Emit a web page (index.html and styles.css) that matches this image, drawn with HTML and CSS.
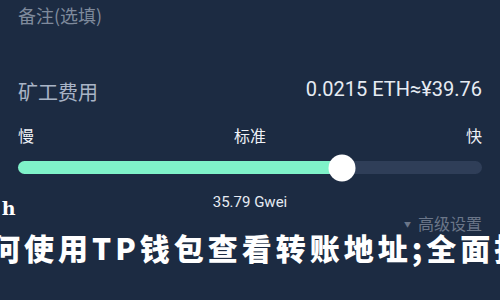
FILE: index.html
```html
<!DOCTYPE html>
<html lang="zh">
<head>
<meta charset="utf-8">
<link rel="stylesheet" href="styles.css">
</head>
<body>
<div class="page">
  <div class="note">备注(选填)</div>
  <div class="fee-row">
    <span class="fee-label">矿工费用</span>
    <span class="fee-value">0.0215 ETH≈¥39.76</span>
  </div>
  <div class="levels">
    <span>慢</span>
    <span>标准</span>
    <span>快</span>
  </div>
  <div class="slider">
    <div class="fill" style="width: 69.8%"></div>
    <div class="thumb" style="left: 69.8%"></div>
  </div>
  <div class="gwei">35.79 Gwei</div>
  <div class="advanced"><span class="caret">▼</span>高级设置</div>
</div>
<div class="wm-small">sh</div>
<div class="wm-title">如何使用TP钱包查看转账地址;全面指南</div>
</body>
</html>
```
FILE: styles.css
```css
html, body {
  margin: 0;
  padding: 0;
  background: #1c2b42;
  width: 500px;
  height: 300px;
  overflow: hidden;
}
body {
  position: relative;
  font-family: "Noto Sans CJK SC", "Noto Sans", sans-serif;
}
.page {
  padding: 3px 18px 0 18px;
}
.note {
  font-size: 18px;
  line-height: 24px;
  color: #7f8a9c;
}
.fee-row {
  margin-top: 51px;
  height: 28px;
  display: flex;
  justify-content: space-between;
  align-items: center;
}
.fee-label {
  font-size: 20px;
  line-height: 28px;
  color: #a9b4c6;
}
.fee-value {
  font-family: Roboto, "Noto Sans", sans-serif;
  font-size: 20px;
  color: #e6ebf3;
  margin-top: -7px;
}
.levels {
  margin-top: 18px;
  display: flex;
  justify-content: space-between;
  font-size: 16px;
  line-height: 22px;
  color: #eef1f6;
}
.slider {
  position: relative;
  margin: 15px 0 0 0;
  height: 13px;
  border-radius: 7px;
  background: #2f3e58;
}
.fill {
  height: 100%;
  border-radius: 7px;
  background: #7ff2c9;
}
.thumb {
  position: absolute;
  top: 50%;
  width: 27px;
  height: 27px;
  border-radius: 50%;
  background: #ffffff;
  transform: translate(-50%, -50%);
}
.gwei {
  margin-top: 19px;
  text-align: center;
  font-family: Roboto, "Noto Sans", sans-serif;
  font-size: 15px;
  line-height: 18px;
  color: #e6ebf3;
}
.advanced {
  display: flex;
  justify-content: flex-end;
  align-items: center;
  font-size: 16px;
  line-height: 18px;
  color: #6b7689;
  margin-top: 1px;
}
.caret {
  font-size: 7px;
  margin-right: 7px;
  margin-top: 3px;
}
.wm-small {
  position: absolute;
  left: -12px;
  top: 197px;
  font-family: "DejaVu Serif", serif;
  font-weight: bold;
  font-size: 19px;
  letter-spacing: 3px;
  color: #ffffff;
}
.wm-title {
  position: absolute;
  left: -44px;
  top: 231px;
  white-space: nowrap;
  font-family: "Noto Sans CJK SC", sans-serif;
  font-weight: 900;
  font-size: 30px;
  line-height: 32px;
  letter-spacing: 4px;
  color: #ffffff;
}
```
